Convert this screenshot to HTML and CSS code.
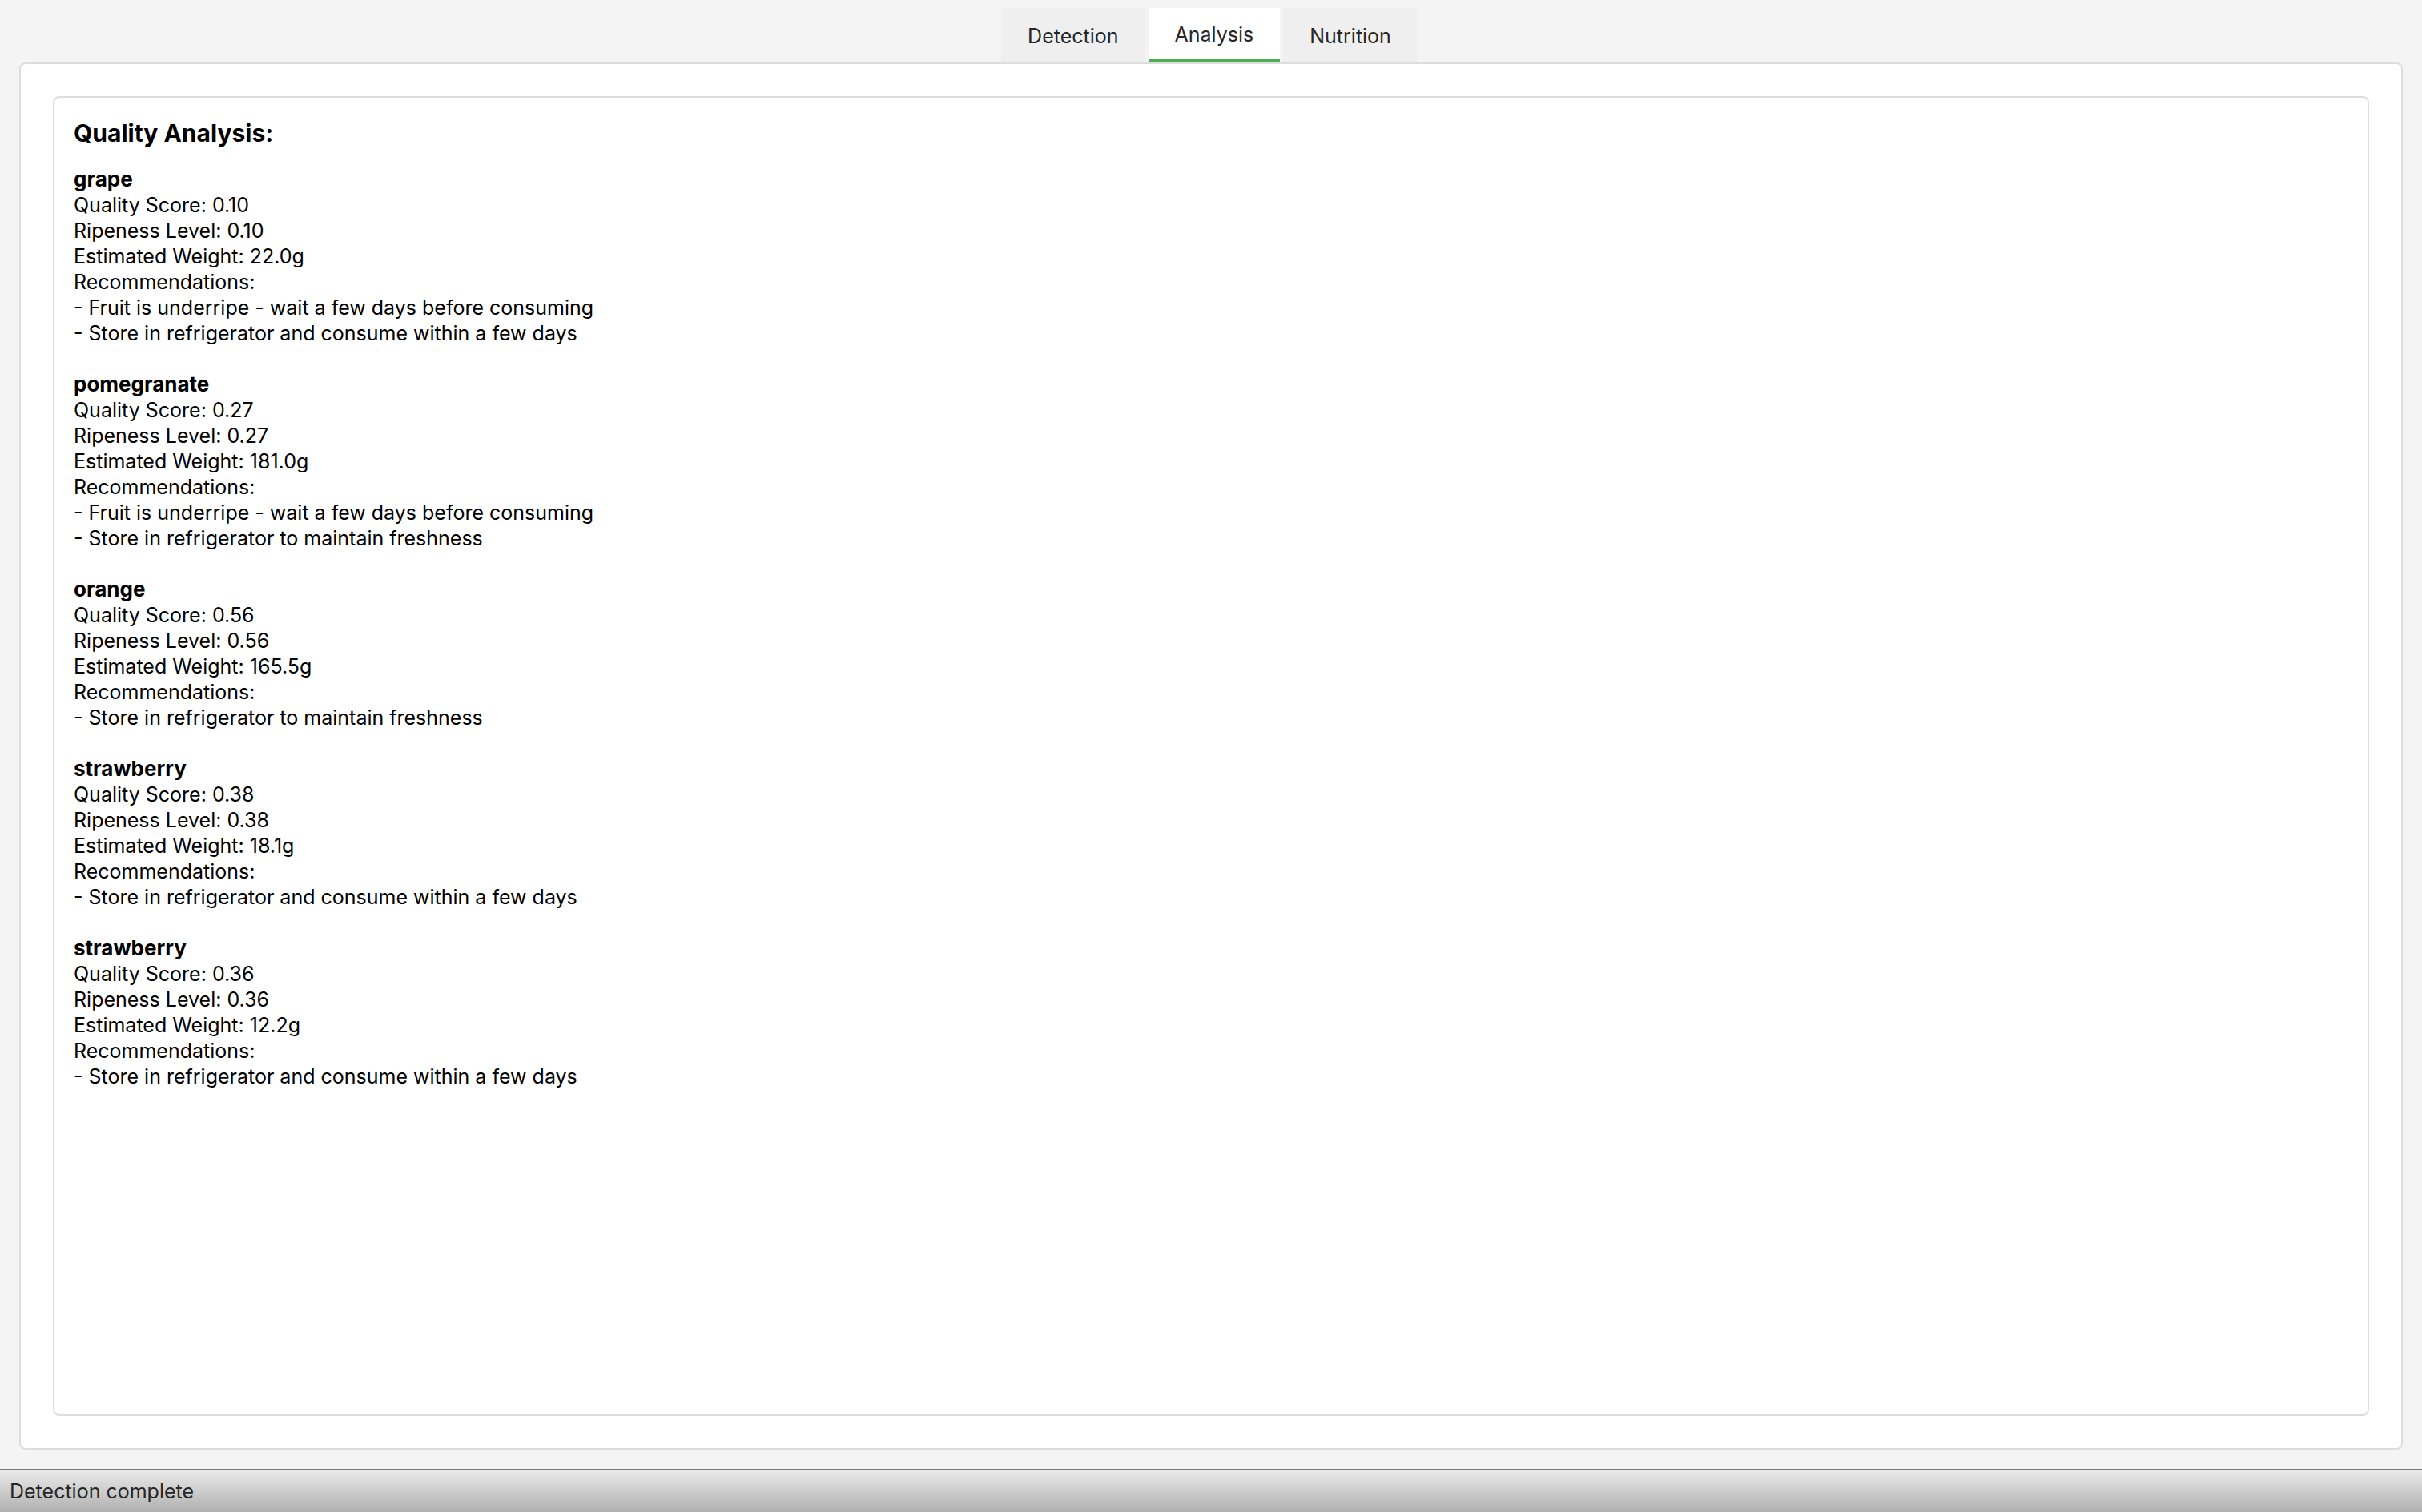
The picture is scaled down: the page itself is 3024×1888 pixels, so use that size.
FILE: index.html
```html
<!DOCTYPE html>
<html lang="en">
<head>
<meta charset="utf-8">
<title>Fruit Analysis</title>
<link rel="stylesheet" href="styles.css">
</head>
<body>
<nav class="tabs" role="tablist">
<button class="tab" role="tab" aria-selected="false">Detection</button>
<button class="tab tab-active" role="tab" aria-selected="true">Analysis</button>
<button class="tab" role="tab" aria-selected="false">Nutrition</button>
</nav>
<main class="pane">
<div class="report">
<h1 class="title">Quality Analysis:</h1>
<section class="fruit">
<h2 class="name">grape</h2>
<p class="line">Quality Score: 0.10</p>
<p class="line">Ripeness Level: 0.10</p>
<p class="line">Estimated Weight: 22.0g</p>
<p class="line">Recommendations:</p>
<p class="line">- Fruit is underripe - wait a few days before consuming</p>
<p class="line">- Store in refrigerator and consume within a few days</p>
</section>
<section class="fruit">
<h2 class="name">pomegranate</h2>
<p class="line">Quality Score: 0.27</p>
<p class="line">Ripeness Level: 0.27</p>
<p class="line">Estimated Weight: 181.0g</p>
<p class="line">Recommendations:</p>
<p class="line">- Fruit is underripe - wait a few days before consuming</p>
<p class="line">- Store in refrigerator to maintain freshness</p>
</section>
<section class="fruit">
<h2 class="name">orange</h2>
<p class="line">Quality Score: 0.56</p>
<p class="line">Ripeness Level: 0.56</p>
<p class="line">Estimated Weight: 165.5g</p>
<p class="line">Recommendations:</p>
<p class="line">- Store in refrigerator to maintain freshness</p>
</section>
<section class="fruit">
<h2 class="name">strawberry</h2>
<p class="line">Quality Score: 0.38</p>
<p class="line">Ripeness Level: 0.38</p>
<p class="line">Estimated Weight: 18.1g</p>
<p class="line">Recommendations:</p>
<p class="line">- Store in refrigerator and consume within a few days</p>
</section>
<section class="fruit">
<h2 class="name">strawberry</h2>
<p class="line">Quality Score: 0.36</p>
<p class="line">Ripeness Level: 0.36</p>
<p class="line">Estimated Weight: 12.2g</p>
<p class="line">Recommendations:</p>
<p class="line">- Store in refrigerator and consume within a few days</p>
</section>
</div>
</main>
<footer class="status">Detection complete</footer>
</body>
</html>
```
FILE: styles.css
```css
* { box-sizing: border-box; }
body {
  margin: 0;
  min-height: 100vh;
  display: flex;
  flex-direction: column;
  background: #f4f4f4;
  color: #000;
  font: 25px/32px Inter, "Liberation Sans", sans-serif;
}
.tabs {
  display: flex;
  justify-content: center;
  height: 78px;
  padding-top: 10px;
}
.tab {
  margin: 0 4px 0 0;
  border: 0;
  padding: 2px 33px 0;
  background: #efefef;
  color: #262626;
  font: inherit;
}
.tab-active {
  background: #fff;
  border-bottom: 4px solid #4caf50;
}
.pane {
  flex: 1;
  display: flex;
  margin: 0 24px 24px;
  padding: 40px;
  border: 2px solid #ddd;
  border-radius: 8px;
  background: #fff;
}
.report {
  flex: 1;
  padding: 24px;
  border: 2px solid #ddd;
  border-radius: 8px;
}
.title { margin: 0 0 22px; font-size: 30px; line-height: 40px; font-weight: 700; }
.fruit { margin-bottom: 32px; }
.name { margin: 0; font-size: 26px; line-height: 32px; font-weight: 700; }
.line { margin: 0; }
.status {
  height: 54px;
  padding: 0 12px;
  border-top: 1px solid #757575;
  background: linear-gradient(#ebebeb, #b0b0b0);
  color: #262626;
  line-height: 54px;
}
```
